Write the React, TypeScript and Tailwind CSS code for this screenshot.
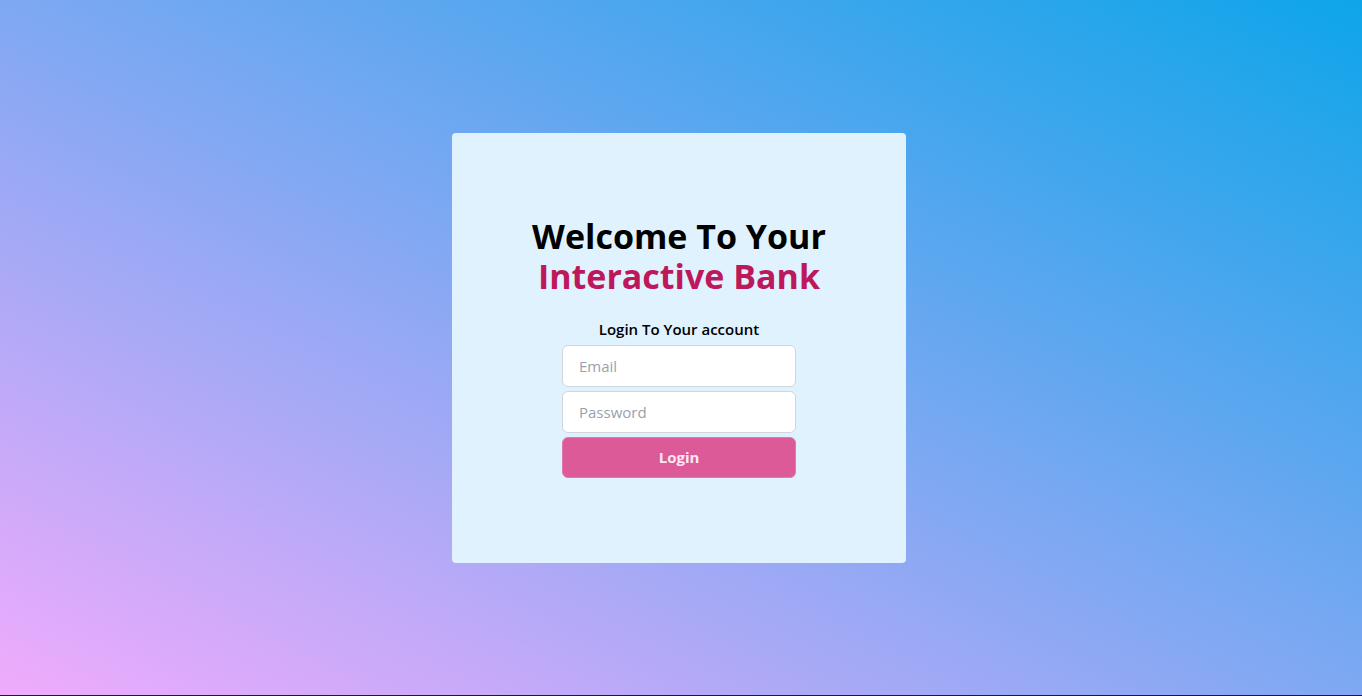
export default function App() {
  return (
    <div className="bg-[#1c1b29] h-[696px]">
      <div
        className="h-[695px] w-full flex items-center justify-center pr-1 bg-[linear-gradient(to_top_right,#f0abfc,#0ea5e9)]"
        style={{ fontFamily: '"Open Sans", "Noto Sans", sans-serif' }}
      >
        <div className="w-[454px] h-[430px] bg-[#e0f2fe] rounded flex flex-col items-center justify-center pb-[2px]">
          <h1 className="text-[34px] leading-10 font-bold text-center text-black">
            Welcome To Your
            <br />
            <span className="text-[#be185d]">Interactive Bank</span>
          </h1>
          <p className="mt-[21px] text-[15px] leading-6 font-semibold text-black">Login To Your account</p>
          <div className="mt-1 w-[234px] flex flex-col gap-1">
            <input
              type="email"
              placeholder="Email"
              className="h-[42px] w-full bg-white border border-gray-300 rounded-md px-4 text-[15px] placeholder:text-gray-400 outline-none"
            />
            <input
              type="password"
              placeholder="Password"
              className="h-[42px] w-full bg-white border border-gray-300 rounded-md px-4 text-[15px] placeholder:text-gray-400 outline-none"
            />
            <button className="h-[41px] w-full bg-[#dc5a98] border border-[#e07aab] rounded-md text-[15px] font-bold text-pink-100">
              Login
            </button>
          </div>
        </div>
      </div>
    </div>
  );
}
